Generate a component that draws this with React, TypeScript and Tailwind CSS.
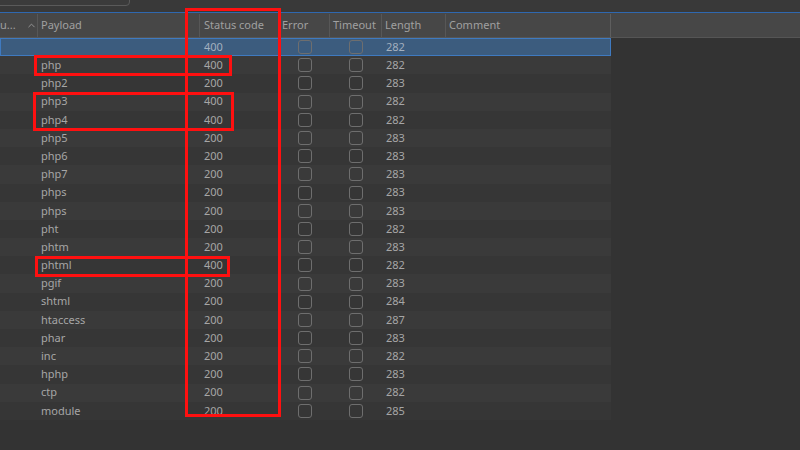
import { ChevronUp } from "lucide-react";

type Row = { payload: string; status: number; length: number };

const rows: Row[] = [
  { payload: "", status: 400, length: 282 },
  { payload: "php", status: 400, length: 282 },
  { payload: "php2", status: 200, length: 283 },
  { payload: "php3", status: 400, length: 282 },
  { payload: "php4", status: 400, length: 282 },
  { payload: "php5", status: 200, length: 283 },
  { payload: "php6", status: 200, length: 283 },
  { payload: "php7", status: 200, length: 283 },
  { payload: "phps", status: 200, length: 283 },
  { payload: "phps", status: 200, length: 283 },
  { payload: "pht", status: 200, length: 282 },
  { payload: "phtm", status: 200, length: 283 },
  { payload: "phtml", status: 400, length: 282 },
  { payload: "pgif", status: 200, length: 283 },
  { payload: "shtml", status: 200, length: 284 },
  { payload: "htaccess", status: 200, length: 287 },
  { payload: "phar", status: 200, length: 283 },
  { payload: "inc", status: 200, length: 282 },
  { payload: "hphp", status: 200, length: 283 },
  { payload: "ctp", status: 200, length: 282 },
  { payload: "module", status: 200, length: 285 },
];

function Check() {
  return <div className="w-[14px] h-[14px] rounded-[3px] border border-[#6e6e6e]" />;
}

export default function App() {
  return (
    <div
      className="relative w-[800px] h-[450px] overflow-hidden bg-[#333333] text-[11px] text-[#a6a6a6]"
      style={{ fontFamily: '"Noto Sans", "DejaVu Sans", sans-serif' }}
    >
      {/* top strip with a clipped input box */}
      <div className="h-[12px] bg-[#393939] relative">
        <div className="absolute left-[-4px] top-[-14px] w-[134px] h-[20px] rounded-[4px] border border-[#5a5a5a] bg-[#3b3b3b]" />
      </div>
      <div className="h-[1px] bg-[#2f68b0]" />

      {/* header */}
      <div className="flex h-[25px] pt-[1px] bg-[#474747] border-b border-[#555555] text-[#a0a0a0]">
        <div className="w-[38px] flex items-center gap-[10px] border-r border-[#575757]">
          <span>u...</span>
          <ChevronUp size={11} strokeWidth={2} className="text-[#9a9a9a]" />
        </div>
        <div className="w-[162px] flex items-center pl-[3px] border-r border-[#575757]">Payload</div>
        <div className="w-[79px] flex items-center pl-[4px] border-r border-[#575757]">Status code</div>
        <div className="w-[51px] flex items-center pl-[3px] border-r border-[#575757]">Error</div>
        <div className="w-[52px] flex items-center pl-[3px] border-r border-[#575757]">Timeout</div>
        <div className="w-[64px] flex items-center pl-[3px] border-r border-[#575757]">Length</div>
        <div className="w-[165px] flex items-center pl-[3px] border-r border-[#5e5e5e]">Comment</div>
        <div className="flex-1" />
      </div>

      {/* rows */}
      <div className="w-[611px]">
        {rows.map((r, i) => (
          <div
            key={i}
            className={
              i === 0
                ? "flex items-center h-[18.2px] bg-[#3c5c7e] shadow-[inset_0_0_0_1px_#3f7ac0] text-[#a3b0bf]"
                : i % 2 === 1
                  ? "flex items-center h-[18.2px] bg-[#3a3a3a]"
                  : "flex items-center h-[18.2px] bg-[#363636]"
            }
          >
            <div className="w-[38px]" />
            <div className="w-[162px] pl-[3px]">{r.payload}</div>
            <div className="w-[79px] pl-[4px]">{r.status}</div>
            <div className="w-[51px] flex justify-center">
              <Check />
            </div>
            <div className="w-[52px] flex justify-center">
              <Check />
            </div>
            <div className="w-[64px] pl-[4px]">{r.length}</div>
            <div className="flex-1" />
          </div>
        ))}
      </div>

      {/* red annotation boxes */}
      <div className="absolute left-[185px] top-[8px] w-[96px] h-[409px] border-[3px] border-[#ff1010]" />
      <div className="absolute left-[34px] top-[55px] w-[198px] h-[21px] border-[3px] border-[#ff1010]" />
      <div className="absolute left-[33px] top-[92px] w-[201px] h-[39px] border-[3px] border-[#ff1010]" />
      <div className="absolute left-[35px] top-[256px] w-[195px] h-[21px] border-[3px] border-[#ff1010]" />
    </div>
  );
}
